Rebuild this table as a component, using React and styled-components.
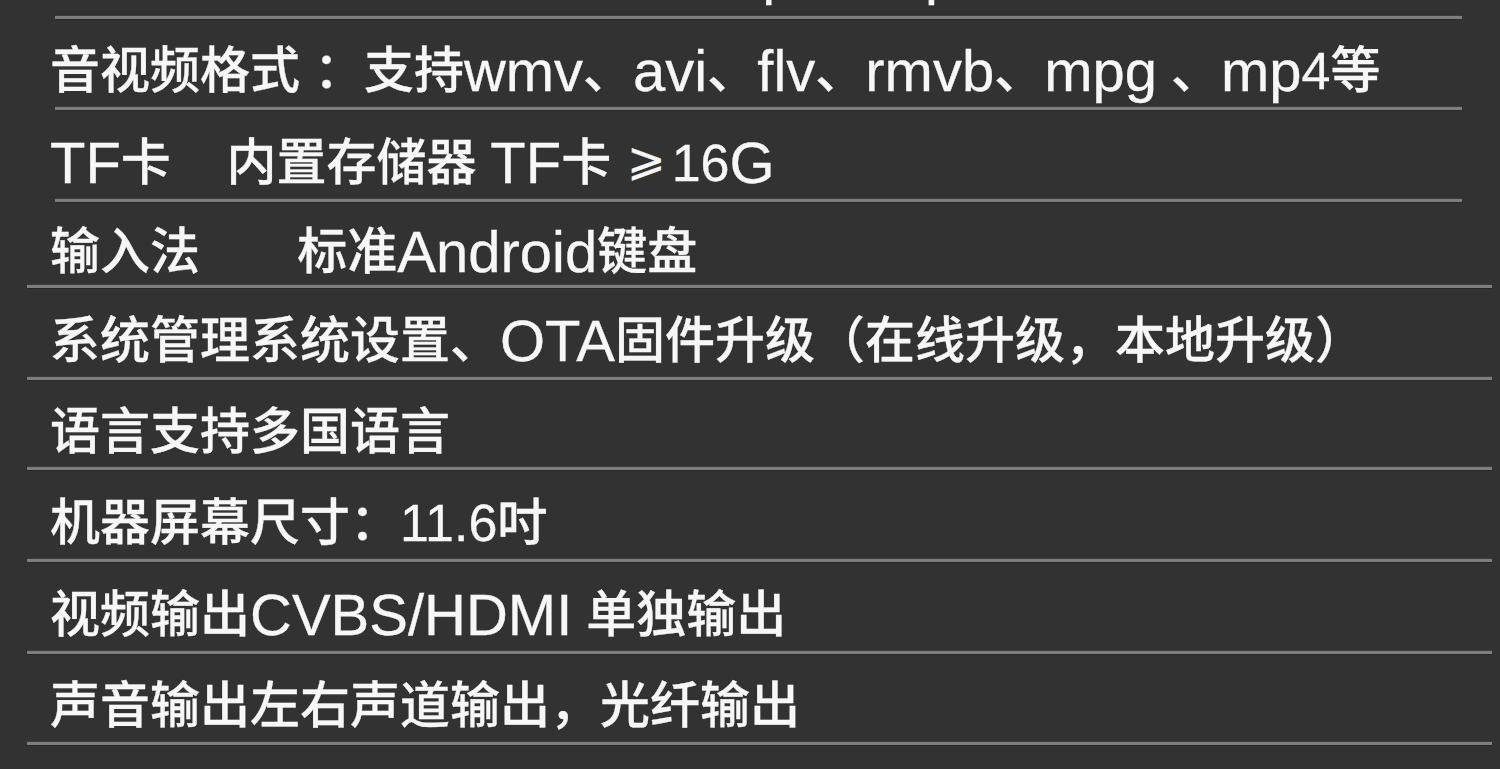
import React from "react";
import styled, { createGlobalStyle } from "styled-components";

const Global = createGlobalStyle`
  html, body { margin: 0; padding: 0; background: #323232; }
  body { overflow: hidden; }
`;

const Page = styled.div`
  width: 1500px;
  height: 769px;
  overflow: hidden;
  background: #323232;
  font-family: "Liberation Sans", "Noto Sans CJK SC", sans-serif;
  color: #f7f7f7;
`;

const List = styled.div`
  display: flex;
  flex-direction: column;
  margin-top: -72px;
`;

const Row = styled.div`
  display: flex;
  flex-direction: column;
  height: ${(p) => p.$h}px;
`;

const Text = styled.div`
  flex: 1;
  display: flex;
  align-items: center;
  padding: ${(p) => (p.$lift ? 2 : 16)}px 0 0 50px;
  font-size: 50px;
  line-height: 50px;
  font-weight: 500;
  white-space: pre;
  -webkit-text-stroke: 0.3px #f7f7f7;
`;

const Run = styled.span`
  line-height: 50px;
`;

const Symbol = styled.span`
  font-family: "DejaVu Sans", sans-serif;
  font-size: 46px;
  font-weight: 400;
  line-height: 50px;
  position: relative;
  top: -4px;
  margin: 0 6px 0 2px;
`;

const Latin = styled.span`
  font-size: ${(p) => (p.$digit ? 52 : 58)}px;
  line-height: 50px;
  font-weight: 400;
`;

const Divider = styled.div`
  height: 3px;
  margin-left: ${(p) => (p.$wide ? 27 : 55)}px;
  width: ${(p) => (p.$wide ? 1465 : 1407)}px;
  background: #7e7e7e;
  box-shadow: 0 -1px 0 #3c3c3c, 0 1px 0 #292929;
`;

const rows = [
  { t: "音频格式 ：支持wma、aac、ape、mp3", h: 91, lift: true },
  { t: "音视频格式 ：支持wmv、avi、flv、rmvb、mpg 、mp4等", h: 91 },
  { t: "TF卡    内置存储器 TF卡 ≥16G", h: 92 },
  { t: "输入法       标准Android键盘", h: 86, wide: true },
  { t: "系统管理系统设置、OTA固件升级（在线升级，本地升级）", h: 92, wide: true },
  { t: "语言支持多国语言", h: 90, wide: true },
  { t: "机器屏幕尺寸：11.6吋", h: 92, wide: true },
  { t: "视频输出CVBS/HDMI 单独输出", h: 92, wide: true },
  { t: "声音输出左右声道输出，光纤输出", h: 91, wide: true },
];

function renderRuns(text) {
  const parts = text.split(/([A-Za-z\/]+|[0-9.]+|≥)/);
  return parts.map((p, i) => {
    if (!p) return null;
    if (p === "≥") return <Symbol key={i}>⩾</Symbol>;
    if (/^[A-Za-z\/]+$/.test(p)) return <Latin key={i}>{p}</Latin>;
    if (/^[0-9.]+$/.test(p)) return <Latin key={i} $digit>{p}</Latin>;
    return <Run key={i}>{p}</Run>;
  });
}

export default function App() {
  return (
    <Page>
      <Global />
      <List>
        {rows.map((r, i) => (
          <Row key={i} $h={r.h}>
            <Text $lift={r.lift}>{renderRuns(r.t)}</Text>
            <Divider $wide={r.wide} />
          </Row>
        ))}
      </List>
    </Page>
  );
}
